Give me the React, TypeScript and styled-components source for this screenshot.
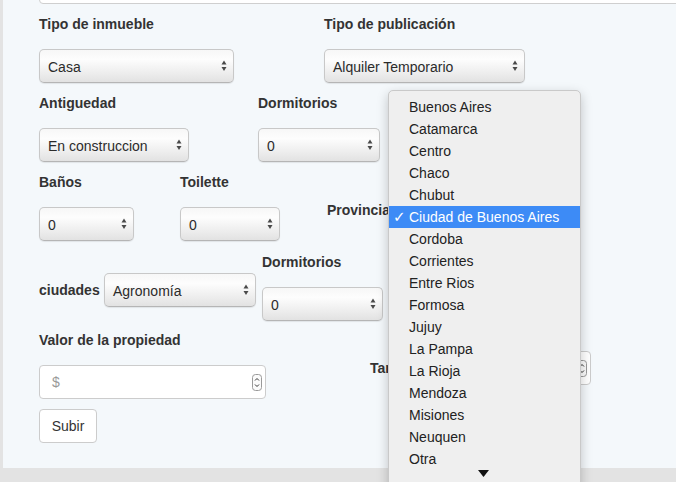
import React from "react";
import styled, { createGlobalStyle } from "styled-components";

const GlobalStyle = createGlobalStyle`
  html, body {
    margin: 0;
    padding: 0;
    overflow: hidden;
  }
  body {
    font-family: "Liberation Sans", Arial, sans-serif;
    font-size: 14px;
    color: #333;
  }
`;

const Page = styled.div`
  position: relative;
  width: 676px;
  height: 482px;
  background: #e3e3e3;
  display: flex;
  overflow: hidden;
`;

const Panel = styled.div`
  margin-left: 3px;
  width: 673px;
  height: 468px;
  background: #f4f8fb;
  padding-left: 36px;
  box-sizing: border-box;
  overflow: hidden;
`;

const TopInput = styled.div`
  margin-top: -29px;
  width: 700px;
  height: 33px;
  background: #fff;
  border: 1px solid #cfcfcf;
  border-radius: 4px;
  box-sizing: border-box;
`;

const Row = styled.div<{ $mt: number }>`
  display: flex;
  align-items: flex-start;
  margin-top: ${(p) => p.$mt}px;
`;

const Field = styled.div<{ $w: number; $ml?: number }>`
  display: flex;
  flex-direction: column;
  width: ${(p) => p.$w}px;
  margin-left: ${(p) => p.$ml || 0}px;
`;

const Label = styled.label`
  display: block;
  font-weight: bold;
  line-height: 20px;
  height: 20px;
  margin-bottom: 15px;
  color: #333;
  white-space: nowrap;
`;

const InlineGroup = styled.div<{ $ml?: number }>`
  display: flex;
  align-items: center;
  margin-top: 21px;
  margin-left: ${(p) => p.$ml || 0}px;
`;

const InlineLabel = styled.label<{ $w: number }>`
  font-weight: bold;
  width: ${(p) => p.$w}px;
  white-space: nowrap;
  color: #333;
`;

const SelectBox = styled.div<{ $w?: number }>`
  display: flex;
  align-items: center;
  height: 34px;
  width: ${(p) => (p.$w ? `${p.$w}px` : "100%")};
  box-sizing: border-box;
  padding-left: 8px;
  border: 1px solid #c8c8c8;
  border-bottom-color: #b5b5b5;
  border-radius: 5px;
  background: linear-gradient(#f7f7f7, #fdfdfd 30%, #ececec 75%, #e2e2e2);
  box-shadow: 0 1px 1px rgba(0, 0, 0, 0.08);
  color: #2b2b2b;
  white-space: nowrap;
  overflow: hidden;
`;

const SelectText = styled.span`
  flex: 1;
  padding-top: 1px;
`;

const Arrows = styled.svg`
  flex: none;
  margin-right: 6px;
`;

const TextInput = styled.div<{ $w?: number }>`
  display: flex;
  align-items: center;
  height: 34px;
  width: ${(p) => (p.$w ? `${p.$w}px` : "100%")};
  box-sizing: border-box;
  padding-left: 12px;
  background: #fff;
  border: 1px solid #cccccc;
  border-radius: 4px;
  color: #999;
`;

const Spinner = styled.svg`
  margin-left: auto;
  margin-right: 3px;
`;

const Button = styled.button`
  margin-top: 10px;
  width: 58px;
  height: 34px;
  background: #fff;
  border: 1px solid #cccccc;
  border-radius: 4px;
  font-family: "Liberation Sans", Arial, sans-serif;
  font-size: 14px;
  color: #333;
  padding: 0;
`;

const Menu = styled.div`
  position: absolute;
  left: 388px;
  top: 90px;
  width: 193px;
  height: 400px;
  box-sizing: border-box;
  padding-top: 5px;
  background: #efefef;
  border: 1px solid #c9c9c9;
  border-radius: 5px;
  box-shadow: 0 4px 12px rgba(0, 0, 0, 0.22);
`;

const MenuItem = styled.div<{ $active?: boolean }>`
  position: relative;
  height: 22px;
  line-height: 22px;
  padding-left: 20px;
  color: ${(p) => (p.$active ? "#fff" : "#222")};
  background: ${(p) => (p.$active ? "#3d8bf6" : "transparent")};
  white-space: nowrap;
`;

const Check = styled.span`
  position: absolute;
  left: 4px;
  top: 0;
  font-family: "DejaVu Sans", sans-serif;
  font-size: 15px;
  font-weight: bold;
`;

const MoreArrow = styled.div`
  display: flex;
  justify-content: center;
  padding-right: 2px;
`;

function UpDown() {
  return (
    <Arrows width="6" height="12" viewBox="0 0 6 12">
      <polygon points="3,0.5 5.5,4.5 0.5,4.5" fill="#4a4a4a" />
      <polygon points="0.5,7 5.5,7 3,11" fill="#4a4a4a" />
    </Arrows>
  );
}

function Select({ value, w }: { value: string; w?: number }) {
  return (
    <SelectBox $w={w}>
      <SelectText>{value}</SelectText>
      <UpDown />
    </SelectBox>
  );
}

function NumberSpin() {
  return (
    <Spinner width="10" height="17" viewBox="0 0 10 17">
      <rect x="0.5" y="0.5" width="9" height="16" rx="3" fill="#fbfbfb" stroke="#9a9a9a" />
      <polyline points="3,6.5 5,4.5 7,6.5" fill="none" stroke="#333" strokeWidth="1" />
      <polyline points="3,10.5 5,12.5 7,10.5" fill="none" stroke="#333" strokeWidth="1" />
    </Spinner>
  );
}

const provincias = [
  "Buenos Aires",
  "Catamarca",
  "Centro",
  "Chaco",
  "Chubut",
  "Ciudad de Buenos Aires",
  "Cordoba",
  "Corrientes",
  "Entre Rios",
  "Formosa",
  "Jujuy",
  "La Pampa",
  "La Rioja",
  "Mendoza",
  "Misiones",
  "Neuquen",
  "Otra",
];

export default function App() {
  const selected = "Ciudad de Buenos Aires";

  return (
    <>
      <GlobalStyle />
      <Page>
        <Panel>
          <TopInput />

          <Row $mt={10}>
            <Field $w={195}>
              <Label>Tipo de inmueble</Label>
              <Select value="Casa" />
            </Field>
            <Field $w={201} $ml={90}>
              <Label>Tipo de publicación</Label>
              <Select value="Alquiler Temporario" />
            </Field>
          </Row>

          <Row $mt={10}>
            <Field $w={150}>
              <Label>Antiguedad</Label>
              <Select value="En construccion" />
            </Field>
            <Field $w={122} $ml={69}>
              <Label>Dormitorios</Label>
              <Select value="0" />
            </Field>
          </Row>

          <Row $mt={10}>
            <Field $w={95}>
              <Label>Baños</Label>
              <Select value="0" />
            </Field>
            <Field $w={100} $ml={46}>
              <Label>Toilette</Label>
              <Select value="0" />
            </Field>
            <InlineGroup $ml={47}>
              <InlineLabel $w={66}>Provincia</InlineLabel>
              <Select value="" w={180} />
            </InlineGroup>
          </Row>

          <Row $mt={11}>
            <InlineGroup>
              <InlineLabel $w={65}>ciudades</InlineLabel>
              <Select value="Agronomía" w={152} />
            </InlineGroup>
            <Field $w={121} $ml={6}>
              <Label>Dormitorios</Label>
              <Select value="0" />
            </Field>
          </Row>

          <Row $mt={9}>
            <Field $w={227}>
              <Label>Valor de la propiedad</Label>
              <TextInput>
                $
                <NumberSpin />
              </TextInput>
            </Field>
            <InlineGroup $ml={104}>
              <InlineLabel $w={56}>Tamaño</InlineLabel>
              <TextInput $w={165}>
                <NumberSpin />
              </TextInput>
            </InlineGroup>
          </Row>

          <Button>Subir</Button>
        </Panel>

        <Menu>
          {provincias.map((p) => (
            <MenuItem key={p} $active={p === selected}>
              {p === selected && <Check>✓</Check>}
              {p}
            </MenuItem>
          ))}
          <MoreArrow>
            <svg width="11" height="8" viewBox="0 0 11 8">
              <polygon points="0,0 11,0 5.5,7" fill="#111" />
            </svg>
          </MoreArrow>
        </Menu>
      </Page>
    </>
  );
}
